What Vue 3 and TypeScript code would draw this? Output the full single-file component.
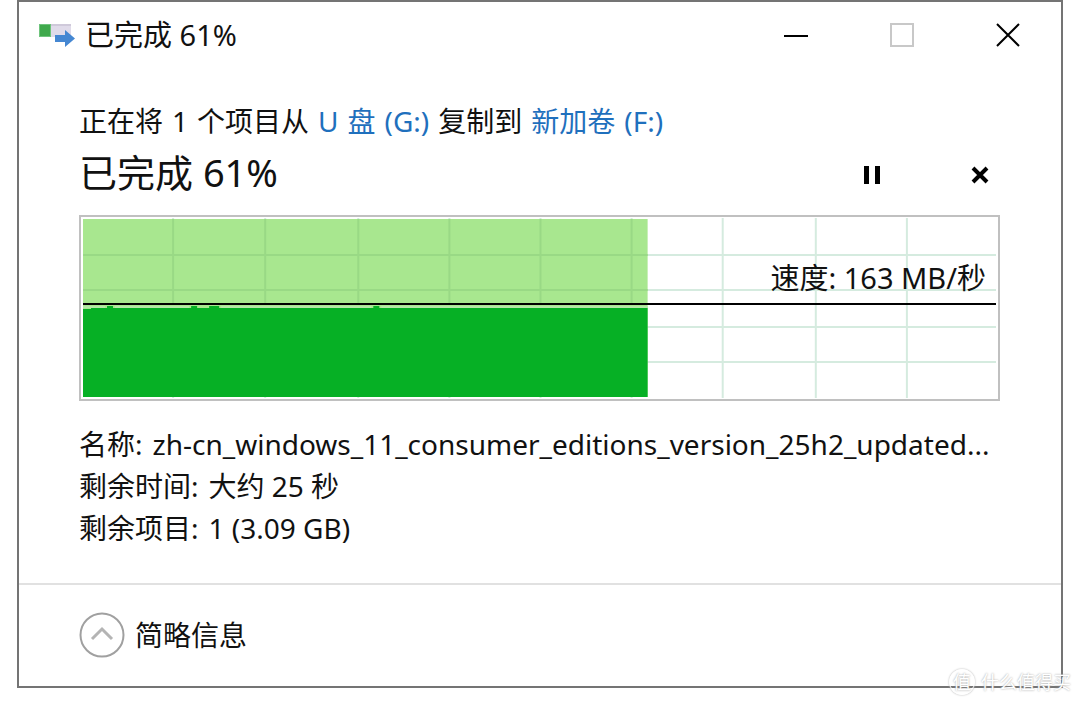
<script setup lang="ts">
import { ref } from 'vue'

const percent = 61
const details = [
  { label: '名称:', value: 'zh-cn_windows_11_consumer_editions_version_25h2_updated...' },
  { label: '剩余时间:', value: '大约 25 秒' },
  { label: '剩余项目:', value: '1 (3.09 GB)' },
]
const verticalLines = [90, 182, 275, 366, 457, 548, 639, 732, 823]
const horizontalLines = [37, 72, 109, 144]
const paused = ref(false)
</script>

<template>
  <main class="page">
    <section class="window">
      <header class="titlebar">
        <svg class="app-icon" width="36" height="24" viewBox="0 0 36 24" aria-hidden="true">
          <rect x="1" y="1" width="31" height="13" fill="#e0dbea" />
          <rect x="1" y="1" width="31" height="2" fill="#cfc9da" />
          <rect x="0" y="1" width="12" height="13" fill="#6fc47d" />
          <rect x="1" y="2" width="10" height="11" fill="#3fa94c" />
          <path d="M16 12H26V7L36 15.500L26 24V19H16Z" fill="#4587d2" />
        </svg>
        <h1 class="title">已完成 {{ percent }}%</h1>
        <div class="window-controls">
          <button type="button" aria-label="最小化">
            <svg width="24" height="24" viewBox="0 0 24 24"><path d="M0 13H24" stroke="#000" stroke-width="2" /></svg>
          </button>
          <button type="button" aria-label="最大化" disabled>
            <svg width="24" height="24" viewBox="0 0 24 24"><rect x="1" y="1" width="22" height="22" fill="none" stroke="#c8c8c8" stroke-width="2" /></svg>
          </button>
          <button type="button" aria-label="关闭">
            <svg width="24" height="24" viewBox="0 0 24 24"><path d="M1 1L23 23M23 1L1 23" stroke="#000" stroke-width="2" /></svg>
          </button>
        </div>
      </header>

      <div class="content">
        <p class="line summary">
          <span>正在将</span>
          <span>1</span>
          <span>个项目从</span>
          <a href="#"><span>U</span> <span>盘</span> <span>(G:)</span></a>
          <span>复制到</span>
          <a href="#"><span>新加卷</span> <span>(F:)</span></a>
        </p>
        <div class="status">
          <h2>已完成 {{ percent }}%</h2>
          <div class="actions">
            <button type="button" aria-label="暂停" :aria-pressed="paused" @click="paused = !paused">
              <svg width="18" height="20" viewBox="0 0 18 20"><path d="M1 1H6V19H1ZM12 1H17V19H12Z" fill="#000" /></svg>
            </button>
            <button type="button" aria-label="取消">
              <svg width="18" height="20" viewBox="0 0 18 20"><path d="M2 3L16 17M16 3L2 17" stroke="#000" stroke-width="4" /></svg>
            </button>
          </div>
        </div>

        <div class="chart">
          <svg class="plot" viewBox="0 0 912 180" preserveAspectRatio="none" aria-hidden="true">
            <g stroke="#d5ebdf" stroke-width="2">
              <path v-for="x in verticalLines" :key="x" :d="`M${x} 0V180`" />
              <path v-for="y in horizontalLines" :key="y" :d="`M0 ${y}H912`" />
            </g>
            <rect x="0" y="1" width="564" height="178" fill="#a8e78f" />
            <g stroke="#99d985" stroke-width="2">
              <path v-for="x in verticalLines.slice(0, 6)" :key="x" :d="`M${x} 1V86`" />
              <path d="M0 37H564M0 72H564" />
            </g>
            <path d="M0 91H8V90H24V88H30V90H108V88H114V90H126V88H136V90H290V88H296V90H564V179H0Z" fill="#06b025" />
            <path d="M0 89H22M32 89H106M138 89H288M298 89H564" stroke="#b4e9a7" stroke-width="2" />
            <path d="M0 86H912" stroke="#000" stroke-width="2" />
          </svg>
          <span class="speed">速度: 163 MB/秒</span>
        </div>

        <dl class="details">
          <div v-for="item in details" :key="item.label" class="line detail">
            <dt>{{ item.label }}</dt>
            <dd>{{ item.value }}</dd>
          </div>
        </dl>
      </div>

      <footer class="footer">
        <button type="button" class="toggle">
          <svg width="46" height="46" viewBox="0 0 46 46" aria-hidden="true">
            <circle cx="23" cy="23" r="21.500" fill="none" stroke="#a0a0a0" stroke-width="2" />
            <path d="M13 27L23 17L33 27" fill="none" stroke="#b4b4b4" stroke-width="3" />
          </svg>
          <span>简略信息</span>
        </button>
      </footer>
    </section>

    <div class="watermark">
      <span class="badge">值</span>
      <span>什么值得买</span>
    </div>
  </main>
</template>

<style>
body {
  margin: 0;
  background: #fff;
}
</style>

<style scoped>
.page {
  position: relative;
  padding: 0 17px 16px;
  font-family: "Noto Sans", "Noto Sans CJK SC", sans-serif;
  font-size: 28px;
  color: #111;
}

.window {
  border: 2px solid #747474;
  background: #fff;
}

.titlebar {
  display: flex;
  align-items: center;
  height: 66px;
  padding-left: 20px;
}

.app-icon {
  margin-right: 10px;
}

.title {
  flex: 1;
  margin: 0;
  font-size: 29px;
  font-weight: 400;
  line-height: 42px;
}

button {
  display: flex;
  align-items: center;
  justify-content: center;
  padding: 0;
  border: 0;
  background: none;
  font: inherit;
  color: inherit;
}

.window-controls {
  display: flex;
}

.window-controls button {
  width: 106px;
  height: 66px;
}

.content {
  padding: 32px 61px 34px 60px;
}

.line {
  margin: 0;
  line-height: 42px;
  white-space: nowrap;
}

.summary,
.summary a {
  display: flex;
  gap: 9px;
}

.summary a {
  color: #1f70bd;
  text-decoration: none;
}

.status {
  display: flex;
  align-items: center;
  justify-content: space-between;
  height: 60px;
}

.status h2 {
  margin: 0;
  font-size: 38px;
  font-weight: 400;
  line-height: 60px;
}

.actions {
  display: flex;
  gap: 68px;
  padding-top: 6px;
}

.actions button {
  width: 40px;
  height: 40px;
}

.chart {
  position: relative;
  margin-top: 13px;
  padding: 1px 2px;
  border: 2px solid #c0c0c0;
}

.plot {
  display: block;
  width: 100%;
  height: 180px;
}

.speed {
  position: absolute;
  top: 40px;
  right: 12px;
  font-size: 29px;
  line-height: 42px;
}

.details {
  margin: 22px 0 0;
}

.detail {
  display: flex;
  gap: 10px;
}

.detail dd {
  min-width: 0;
  margin: 0;
  overflow: hidden;
  text-overflow: ellipsis;
}

.footer {
  padding: 27px 60px 28px;
  border-top: 2px solid #e1e1e1;
}

.toggle {
  gap: 10px;
}

.toggle span {
  line-height: 42px;
}

.watermark {
  position: absolute;
  right: 9px;
  bottom: 8px;
  display: flex;
  align-items: center;
  gap: 6px;
  font-size: 18px;
  line-height: 28px;
  color: #fff;
  text-shadow: 0 0 2px #999;
}

.badge {
  width: 24px;
  height: 24px;
  border: 1px solid #fff;
  border-radius: 50%;
  box-shadow: 0 0 2px #aaa;
  line-height: 24px;
  text-align: center;
}
</style>
